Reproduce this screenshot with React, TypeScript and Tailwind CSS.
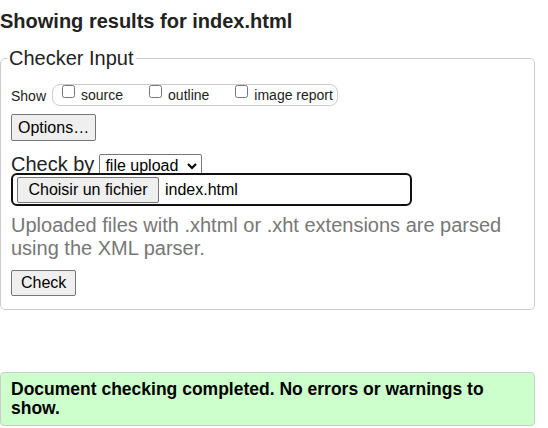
import React from "react";

export default function App() {
  return (
    <div className="w-[548px] h-[428px] bg-white text-[#222] font-['Liberation_Sans',Arial,sans-serif] overflow-hidden">
      <h2 className="pt-[10px] text-[20px] leading-[23px] font-bold">Showing results for index.html</h2>

      <fieldset className="mt-[14px] w-[535px] border border-[#ccc] rounded-[5px] px-[10px] pb-[13px]">
        <legend className="text-[20px] leading-[23px] px-[2px] ml-[-4px]">Checker Input</legend>

        <div className="mt-[14px] flex items-start">
          <span className="text-[14px] leading-[16px] mt-[4px]">Show</span>
          <div className="ml-[6px] h-[22px] border border-[#ccc] rounded-[8px] pl-[9px] pr-[4px] flex items-start gap-[26px]">
            <label className="flex items-start gap-[6px]">
              <input type="checkbox" className="m-0 w-[13px] h-[13px]" />
              <span className="text-[14px] leading-[16px] mt-[2px]">source</span>
            </label>
            <label className="flex items-start gap-[6px]">
              <input type="checkbox" className="m-0 w-[13px] h-[13px]" />
              <span className="text-[14px] leading-[16px] mt-[2px]">outline</span>
            </label>
            <label className="flex items-start gap-[6px]">
              <input type="checkbox" className="m-0 w-[13px] h-[13px]" />
              <span className="text-[14px] leading-[16px] mt-[2px]">image report</span>
            </label>
          </div>
        </div>

        <button className="mt-[8px] h-[27px] px-[6px] text-[16px] leading-[18px] text-black bg-[#efefef] border border-[#767676] rounded-[2px]">
          Options…
        </button>

        <div className="mt-[13px] h-[19px] flex items-start">
          <span className="text-[20px] leading-[23px] mt-[-1px]">Check by</span>
          <div className="ml-[5px] h-[23px] w-[103px] border border-[#767676] rounded-[2px] bg-white flex items-center pl-[5px] pr-[3px] justify-between">
            <span className="text-[16px] leading-[18px] text-black">file upload</span>
            <svg width="12" height="12" viewBox="0 0 12 12" className="mt-[1px]">
              <path d="M2 4 L6 8 L10 4" fill="none" stroke="#000" strokeWidth="2" />
            </svg>
          </div>
        </div>

        <div className="relative w-[401px] h-[33px] border-2 border-[#101010] rounded-[6px] bg-white flex items-center pl-[4px] gap-[6px]">
          <div className="h-[26px] w-[142px] bg-[#efefef] border border-[#767676] rounded-[2px] flex items-center justify-center text-[16px] text-black">
            Choisir un fichier
          </div>
          <span className="text-[16px] text-black">index.html</span>
        </div>

        <p className="mt-[8px] text-[20px] leading-[23px] text-[#777]">
          Uploaded files with .xhtml or .xht extensions are parsed using the XML parser.
        </p>

        <button className="mt-[10px] h-[26px] px-[9px] text-[16px] leading-[18px] text-black bg-[#efefef] border border-[#767676] rounded-[2px]">
          Check
        </button>
      </fieldset>

      <div className="mt-[62px] w-[535px] h-[54px] bg-[#cfc] border border-[#ccc] rounded-[4px] pl-[10px] pr-[10px] pt-[7px]">
        <p className="text-[17.5px] leading-[19px] font-bold text-black">
          Document checking completed. No errors or warnings to show.
        </p>
      </div>
    </div>
  );
}
